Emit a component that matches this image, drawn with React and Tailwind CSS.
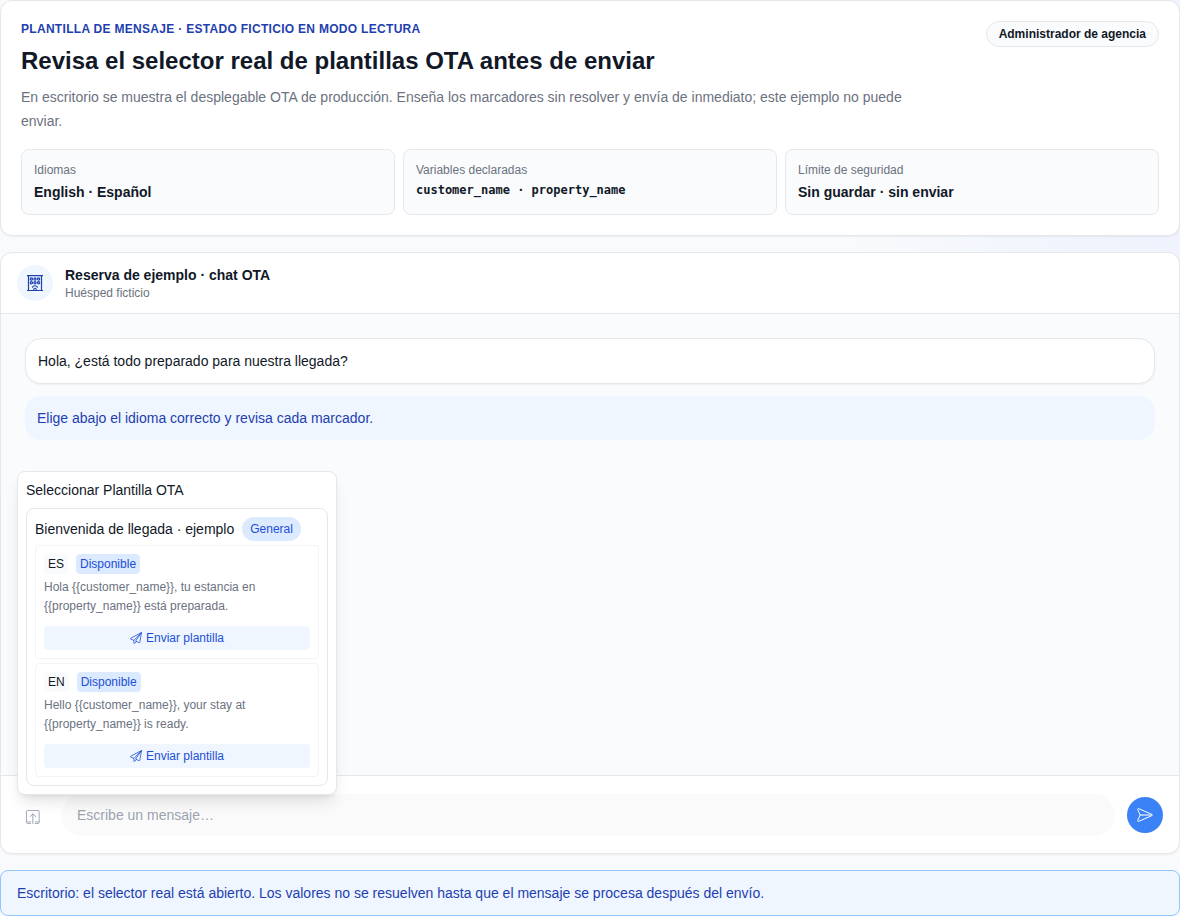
import React, { useState } from 'react';

const templates = [
    { code: 'ES', status: 'Disponible', body: 'Hola {{customer_name}}, tu estancia en {{property_name}} está preparada.' },
    { code: 'EN', status: 'Disponible', body: 'Hello {{customer_name}}, your stay at {{property_name}} is ready.' },
];

const HotelIcon = ({ className }) => (
    <svg className={className} viewBox="0 0 16 16" fill="none" stroke="currentColor" aria-hidden="true">
        <path d="M0 .6h16M0 15.5h16M1.5.6v14.9M14.5.6v14.9" strokeWidth="1.2" />
        {[4, 7.7].map((cy) =>
            [4.4, 8, 11.6].map((cx) => <circle key={`${cx}-${cy}`} cx={cx} cy={cy} r="1.1" strokeWidth="1.2" />)
        )}
        <path d="M5.5 12.8a2.5 2 0 0 1 5 0" strokeWidth="1.1" />
        <path d="M6.8 15.3v-1.1a1.2 1 0 0 1 2.4 0v1.1" strokeWidth="1.1" />
    </svg>
);

const UploadIcon = ({ className }) => (
    <svg
        className={className}
        viewBox="0 0 14 14"
        fill="none"
        stroke="currentColor"
        strokeLinecap="round"
        strokeLinejoin="round"
        aria-hidden="true"
    >
        <path
            d="M4.5 13.5h-3a1 1 0 0 1-1-1v-11a1 1 0 0 1 1-1h10.7a1 1 0 0 1 1 1v11a1 1 0 0 1-1 1H9.4M.6 11.9h3.9M9.4 11.9h3.7"
            strokeWidth="0.9"
        />
        <path d="M6.9 13.5V4M4.2 6.5 6.9 3.8l2.7 2.7" />
    </svg>
);

const PlaneIcon = ({ className }) => (
    <svg
        className={className}
        viewBox="0 0 12 12"
        fill="none"
        stroke="currentColor"
        strokeWidth="0.8"
        strokeLinejoin="round"
        aria-hidden="true"
    >
        <path d="M11.5.5.7 6.3c-.4.2-.4.6 0 .8L3.9 8.4 11.5.5 9.8 10.3c-.1.4-.4.5-.7.4L5.6 9.1 11.5.5" />
        <path d="M3.9 8.4v2.8c0 .4.4.5.7.2l1.9-1.9" />
    </svg>
);

const SendIcon = ({ className }) => (
    <svg
        className={className}
        viewBox="0 0 16 16"
        fill="none"
        stroke="currentColor"
        strokeLinejoin="round"
        aria-hidden="true"
    >
        <path d="M.7 2.5c-.2-.6.3-1.1.9-.9l13.3 5.8c.6.3.6.9 0 1.2L1.6 14.4c-.6.2-1.1-.3-.9-.9L3.2 8Z" />
        <path d="M3.2 7.5 14.5 7.8M3.2 8.5l11.3-.3" strokeWidth="0.6" />
    </svg>
);

const InfoCard = ({ label, children }) => (
    <div className="rounded-lg border border-[#e5e7eb] bg-[#f9fbfc] p-3">
        <dt className="text-xs text-[#6b7280]">{label}</dt>
        <dd className="mt-1 text-sm font-bold">{children}</dd>
    </div>
);

const TemplateOption = ({ template }) => (
    <li className="rounded border border-[#f3f4f6] p-2">
        <div className="flex items-center gap-2 text-xs">
            <span className="rounded bg-[#f9fafb] px-1 py-0.5">{template.code}</span>
            <span className="rounded bg-[#dbeafe] px-1 py-0.5 text-[#1d4ed8]">{template.status}</span>
        </div>
        <p className="mt-1 text-xs leading-[19px] text-[#6b7280]">{template.body}</p>
        <button
            type="button"
            className="mt-[10px] flex w-full items-center justify-center gap-1 rounded bg-[#eff6ff] py-1 text-xs text-[#1d4ed8]"
        >
            <PlaneIcon className="h-3 w-3" />
            Enviar plantilla
        </button>
    </li>
);

const TemplatePicker = () => (
    <div className="absolute bottom-full left-0 mb-1 w-80 rounded-lg border border-[#e5e7eb] bg-white p-2 shadow-lg">
        <h3 className="text-sm">Seleccionar Plantilla OTA</h3>
        <div className="mt-2 rounded-lg border border-[#e5e7eb] p-2">
            <div className="flex items-center gap-2">
                <span className="text-sm">Bienvenida de llegada · ejemplo</span>
                <span className="rounded-full bg-[#dbeafe] px-2 py-1 text-xs text-[#1d4ed8]">General</span>
            </div>
            <ul className="mt-1 space-y-1">
                {templates.map((template) => (
                    <TemplateOption key={template.code} template={template} />
                ))}
            </ul>
        </div>
    </div>
);

const App = () => {
    const [open, setOpen] = useState(true);
    const [message, setMessage] = useState('');

    return (
        <main className="flex min-h-screen flex-col gap-4 bg-[#f9fafb] bg-[radial-gradient(circle_at_100%_12%,#e8effe_0,#f9fafb_360px)] font-['Liberation_Sans',Arial,sans-serif] text-[#111827]">
            <section className="rounded-xl border border-[#e5e7eb] bg-white p-5 shadow-xs">
                <div className="flex items-start justify-between gap-4">
                    <div>
                        <p className="text-xs font-bold tracking-wide text-[#1e40af]">
                            PLANTILLA DE MENSAJE · ESTADO FICTICIO EN MODO LECTURA
                        </p>
                        <h1 className="mt-2 text-2xl font-bold">
                            Revisa el selector real de plantillas OTA antes de enviar
                        </h1>
                        <p className="mt-2 max-w-4xl text-sm leading-6 text-[#6b7280]">
                            En escritorio se muestra el desplegable OTA de producción. Enseña los marcadores sin
                            resolver y envía de inmediato; este ejemplo no puede enviar.
                        </p>
                    </div>
                    <span className="shrink-0 rounded-full border border-[#e5e7eb] bg-[#f9fbfc] px-3 py-1 text-xs font-bold">
                        Administrador de agencia
                    </span>
                </div>
                <dl className="mt-4 grid grid-cols-3 gap-2">
                    <InfoCard label="Idiomas">English · Español</InfoCard>
                    <InfoCard label="Variables declaradas">
                        <code className="block font-['DejaVu_Sans_Mono',monospace] text-xs">
                            customer_name · property_name
                        </code>
                    </InfoCard>
                    <InfoCard label="Límite de seguridad">Sin guardar · sin enviar</InfoCard>
                </dl>
            </section>

            <section className="flex grow flex-col rounded-xl border border-[#e5e7eb] bg-white shadow-xs">
                <header className="flex items-center gap-3 border-b border-[#e5e7eb] px-4 py-3">
                    <span className="flex h-9 w-9 items-center justify-center rounded-full bg-[#eff6ff] text-[#1e40af]">
                        <HotelIcon className="h-4 w-4" />
                    </span>
                    <div>
                        <h2 className="text-sm font-bold">Reserva de ejemplo · chat OTA</h2>
                        <p className="text-xs text-[#6b7280]">Huésped ficticio</p>
                    </div>
                </header>

                <div className="min-h-[420px] grow space-y-3 bg-[#f9fbfc] p-6 text-sm">
                    <p className="rounded-2xl border border-[#e5e7eb] bg-white p-3 shadow-xs">
                        Hola, ¿está todo preparado para nuestra llegada?
                    </p>
                    <p className="rounded-2xl bg-[#eff6ff] p-3 text-[#1e40af]">
                        Elige abajo el idioma correcto y revisa cada marcador.
                    </p>
                </div>

                <form
                    className="flex min-h-[78px] items-center gap-3 border-t border-[#e5e7eb] px-4"
                    onSubmit={(e) => e.preventDefault()}
                >
                    <div className="relative">
                        <button
                            type="button"
                            aria-label="Seleccionar plantilla"
                            aria-expanded={open}
                            onClick={() => setOpen(!open)}
                            className="flex h-8 w-8 items-center justify-center pt-1 text-[#9ca3af]"
                        >
                            <UploadIcon className="h-3.5 w-3.5" />
                        </button>
                        {open && <TemplatePicker />}
                    </div>
                    <input
                        type="text"
                        aria-label="Mensaje"
                        placeholder="Escribe un mensaje…"
                        value={message}
                        onChange={(e) => setMessage(e.target.value)}
                        className="h-[42px] min-w-0 grow rounded-full bg-[#fafafa] px-4 text-sm outline-none placeholder:text-[#9ca3af]"
                    />
                    <button
                        type="submit"
                        aria-label="Enviar"
                        className="flex h-9 w-9 items-center justify-center rounded-full bg-[#3b82f6] text-white"
                    >
                        <SendIcon className="h-4 w-4" />
                    </button>
                </form>
            </section>

            <p className="rounded-lg border border-[#93c5fd] bg-[#eff6ff] px-4 py-3 text-sm text-[#1e40af]">
                Escritorio: el selector real está abierto. Los valores no se resuelven hasta que el mensaje se procesa
                después del envío.
            </p>
        </main>
    );
};

export default App;
